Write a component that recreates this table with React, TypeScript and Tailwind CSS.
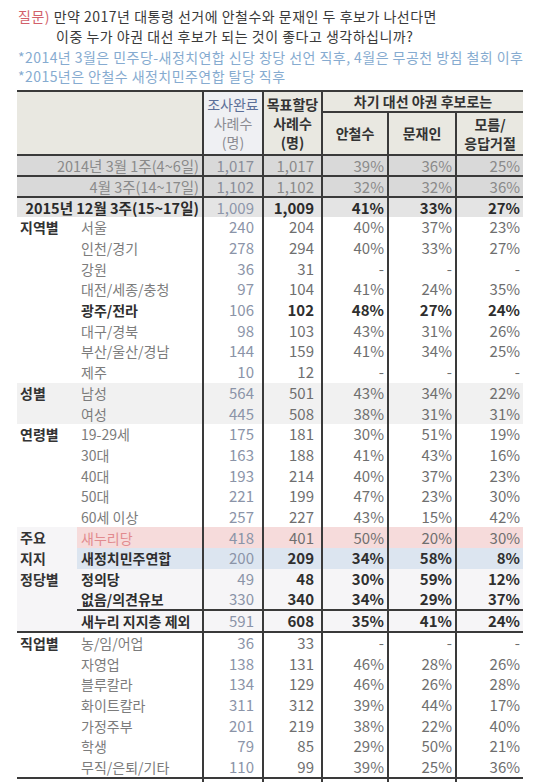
type RowStyle = "normal" | "bold" | "nuri" | "minju"

interface DataRow {
  label: string
  done: string
  target: string
  ahn: string
  moon: string
  none: string
  style?: RowStyle
  splitTop?: boolean
}

interface Group {
  name: string[]
  shade?: string
  ruled?: boolean
  rows: DataRow[]
}

const r = (
  label: string,
  done: string,
  target: string,
  ahn: string,
  moon: string,
  none: string,
  style: RowStyle = "normal",
  splitTop = false
): DataRow => ({ label, done, target, ahn, moon, none, style, splitTop })

const groups: Group[] = [
  {
    name: ["지역별"],
    rows: [
      r("서울", "240", "204", "40%", "37%", "23%"),
      r("인천/경기", "278", "294", "40%", "33%", "27%"),
      r("강원", "36", "31", "-", "-", "-"),
      r("대전/세종/충청", "97", "104", "41%", "24%", "35%"),
      r("광주/전라", "106", "102", "48%", "27%", "24%", "bold"),
      r("대구/경북", "98", "103", "43%", "31%", "26%"),
      r("부산/울산/경남", "144", "159", "41%", "34%", "25%"),
      r("제주", "10", "12", "-", "-", "-"),
    ],
  },
  {
    name: ["성별"],
    shade: "bg-[#f1f1f1]",
    rows: [r("남성", "564", "501", "43%", "34%", "22%"), r("여성", "445", "508", "38%", "31%", "31%")],
  },
  {
    name: ["연령별"],
    rows: [
      r("19-29세", "175", "181", "30%", "51%", "19%"),
      r("30대", "163", "188", "41%", "43%", "16%"),
      r("40대", "193", "214", "40%", "37%", "23%"),
      r("50대", "221", "199", "47%", "23%", "30%"),
      r("60세 이상", "257", "227", "43%", "15%", "42%"),
    ],
  },
  {
    name: ["주요", "지지", "정당별"],
    shade: "bg-[#f6f5f7]",
    ruled: true,
    rows: [
      r("새누리당", "418", "401", "50%", "20%", "30%", "nuri"),
      r("새정치민주연합", "200", "209", "34%", "58%", "8%", "minju"),
      r("정의당", "49", "48", "30%", "59%", "12%", "bold"),
      r("없음/의견유보", "330", "340", "34%", "29%", "37%", "bold"),
      r("새누리 지지층 제외", "591", "608", "35%", "41%", "24%", "bold", true),
    ],
  },
  {
    name: ["직업별"],
    ruled: true,
    rows: [
      r("농/임/어업", "36", "33", "-", "-", "-"),
      r("자영업", "138", "131", "46%", "28%", "26%"),
      r("블루칼라", "134", "129", "46%", "26%", "28%"),
      r("화이트칼라", "311", "312", "39%", "44%", "17%"),
      r("가정주부", "201", "219", "38%", "22%", "40%"),
      r("학생", "79", "85", "29%", "50%", "21%"),
      r("무직/은퇴/기타", "110", "99", "39%", "25%", "36%"),
    ],
  },
  {
    name: ["이념성향별"],
    rows: [
      r("보수", "281", "297", "46%", "27%", "27%"),
      r("중도", "306", "299", "40%", "39%", "21%"),
      r("진보", "257", "247", "33%", "48%", "19%"),
    ],
  },
]

export default function App() {
  return (
    <div className="min-h-screen bg-white font-['Noto_Sans_CJK_KR',sans-serif] text-[#333]">
      <div className="pl-[18px] pt-[6px]">
        <p className="text-[14px] leading-[20px] tracking-[0.5px] text-[#3a3a3a]">
          <span className="text-[#d2606a]">질문)</span> 만약 2017년 대통령 선거에 안철수와 문재인 두 후보가 나선다면
        </p>
        <p className="pl-[38px] text-[14px] leading-[20px] tracking-[0.5px] text-[#3a3a3a]">
          이중 누가 야권 대선 후보가 되는 것이 좋다고 생각하십니까?
        </p>
        <p className="mt-[1px] text-[14px] leading-[20px] tracking-[0.45px] text-[#86abd0]">
          *2014년 3월은 민주당-새정치연합 신당 창당 선언 직후, 4월은 무공천 방침 철회 이후
        </p>
        <p className="text-[14px] leading-[19px] tracking-[0.45px] text-[#86abd0]">
          *2015년은 안철수 새정치민주연합 탈당 직후
        </p>
      </div>

      <table className="ml-[17px] mt-[4px] w-[506px] table-fixed border-collapse">
        <colgroup>
          <col className="w-[60px]" />
          <col className="w-[126px]" />
          <col className="w-[60px]" />
          <col className="w-[59px]" />
          <col className="w-[66px]" />
          <col className="w-[68px]" />
          <col className="w-[67px]" />
        </colgroup>
        <thead>
          <tr className="h-[21px] border-t-2 border-[#3a3a3a]">
            <th rowSpan={2} colSpan={2} className="border-b-2 border-[#3a3a3a] bg-[#e9e8e1] p-0" />
            <th
              rowSpan={2}
              className="border-b-2 border-l-2 border-[#3a3a3a] bg-[#eff0f3] p-0 text-center text-[14px] font-normal leading-[19px]"
            >
              <div className="text-[#5c6f98]">조사완료</div>
              <div className="text-[#8b8b92]">사례수</div>
              <div className="text-[#8b8b92]">(명)</div>
            </th>
            <th
              rowSpan={2}
              className="border-b-2 border-l-2 border-[#3a3a3a] bg-[#e9e8e1] p-0 text-center text-[14px] font-bold leading-[19px] text-[#333]"
            >
              <div>목표할당</div>
              <div>사례수</div>
              <div>(명)</div>
            </th>
            <th
              colSpan={3}
              className="border-b-2 border-l-2 border-[#3a3a3a] bg-[#e9e8e1] p-0 text-center text-[14px] font-bold leading-[19px] text-[#333]"
            >
              차기 대선 야권 후보로는
            </th>
          </tr>
          <tr className="h-[43px]">
            <th className="border-b-2 border-l-2 border-[#3a3a3a] bg-[#e9e8e1] p-0 text-center text-[14px] font-bold text-[#333]">
              안철수
            </th>
            <th className="border-b-2 border-l-2 border-[#3a3a3a] bg-[#e9e8e1] p-0 text-center text-[14px] font-bold text-[#333]">
              문재인
            </th>
            <th className="border-b-2 border-l-2 border-[#3a3a3a] bg-[#e9e8e1] p-0 text-center text-[14px] font-bold leading-[19px] text-[#333]">
              모름/
              <br />
              응답거절
            </th>
          </tr>
        </thead>
        <tbody>
          <TrendRow label="2014년 3월 1주(4~6일)" vals={["1,017", "1,017", "39%", "36%", "25%"]} />
          <TrendRow label="4월 3주(14~17일)" vals={["1,102", "1,102", "32%", "32%", "36%"]} />
          <tr className="h-[19px] bg-[#e4e4e4]">
            <td colSpan={2} className="whitespace-nowrap p-0 pr-[3px] text-right text-[14.5px] font-bold leading-[19px] text-[#2b2b2b]">
              2015년 12월 3주(15~17일)
            </td>
            <td className="border-l-2 border-[#3a3a3a] p-0 pr-[8px] text-right text-[15px] leading-[19px] text-[#8d96aa]">1,009</td>
            <td className="border-l-2 border-[#3a3a3a] p-0 pr-[7px] text-right text-[15px] font-bold leading-[19px] text-[#2b2b2b]">1,009</td>
            <td className="border-l-2 border-[#3a3a3a] p-0 pr-[3px] text-right text-[15px] font-bold leading-[19px] text-[#2b2b2b]">41%</td>
            <td className="border-l-2 border-[#3a3a3a] p-0 pr-[3px] text-right text-[15px] font-bold leading-[19px] text-[#2b2b2b]">33%</td>
            <td className="border-l-2 border-[#3a3a3a] p-0 pr-[3px] text-right text-[15px] font-bold leading-[19px] text-[#2b2b2b]">27%</td>
          </tr>
          {groups.map((g) =>
            g.rows.map((row, i) => (
              <GroupRow key={g.name.join("") + row.label} group={g} row={row} first={i === 0} last={i === g.rows.length - 1} />
            ))
          )}
        </tbody>
      </table>
    </div>
  )
}

function TrendRow({ label, vals }: { label: string; vals: string[] }) {
  return (
    <tr className="h-[20px] border-b-2 border-[#3a3a3a] bg-[#d9d9d9]">
      <td colSpan={2} className="whitespace-nowrap p-0 pr-[3px] text-right text-[14.5px] leading-[19px] text-[#8a8a8a]">
        {label}
      </td>
      <td className="border-l-2 border-[#3a3a3a] p-0 pr-[8px] text-right text-[15px] leading-[19px] text-[#8a8e99]">{vals[0]}</td>
      <td className="border-l-2 border-[#3a3a3a] p-0 pr-[7px] text-right text-[15px] leading-[19px] text-[#8a8a8a]">{vals[1]}</td>
      <td className="border-l-2 border-[#3a3a3a] p-0 pr-[3px] text-right text-[15px] leading-[19px] text-[#8a8a8a]">{vals[2]}</td>
      <td className="border-l-2 border-[#3a3a3a] p-0 pr-[3px] text-right text-[15px] leading-[19px] text-[#8a8a8a]">{vals[3]}</td>
      <td className="border-l-2 border-[#3a3a3a] p-0 pr-[3px] text-right text-[15px] leading-[19px] text-[#8a8a8a]">{vals[4]}</td>
    </tr>
  )
}

function GroupRow({ group, row, first, last }: { group: Group; row: DataRow; first: boolean; last: boolean }) {
  const bottom = group.ruled && last ? "border-b-2 border-[#3a3a3a]" : ""
  const top = row.splitTop ? "border-t-2 border-[#3a3a3a]" : ""

  let rowBg = group.shade ?? "bg-white"
  if (row.style === "nuri") rowBg = "bg-[#f6dbdb]"
  if (row.style === "minju") rowBg = "bg-[#dce5f0]"

  const strong = row.style === "bold" || row.style === "minju"
  const labelColor =
    row.style === "nuri" ? "text-[#e28b8f]" : strong ? "text-[#2f2f2f] font-bold" : "text-[#7c7c7c]"
  const valColor = strong ? "text-[#2f2f2f] font-bold" : "text-[#6f6f6f]"

  return (
    <tr className="h-[20.7px]">
      {first && (
        <td
          rowSpan={group.rows.length}
          className={`${group.shade ?? "bg-white"} ${group.ruled ? "border-b-2 border-[#3a3a3a]" : ""} p-0 pl-[3px] align-top text-[14px] font-bold leading-[20.7px] text-[#333]`}
        >
          {group.name.map((n) => (
            <div key={n} className="whitespace-nowrap">
              {n}
            </div>
          ))}
        </td>
      )}
      <td className={`${rowBg} ${top} ${bottom} whitespace-nowrap p-0 pl-[4px] text-[14px] leading-[20px] ${labelColor}`}>
        {row.label}
      </td>
      <td className={`${rowBg} ${top} ${bottom} border-l-2 border-[#3a3a3a] p-0 pr-[8px] text-right text-[15px] leading-[20px] text-[#8b94a8]`}>
        {row.done}
      </td>
      <td className={`${rowBg} ${top} ${bottom} border-l-2 border-[#3a3a3a] p-0 pr-[7px] text-right text-[15px] leading-[20px] ${valColor}`}>
        {row.target}
      </td>
      <td className={`${rowBg} ${top} ${bottom} border-l-2 border-[#3a3a3a] p-0 pr-[3px] text-right text-[15px] leading-[20px] ${valColor}`}>
        {row.ahn}
      </td>
      <td className={`${rowBg} ${top} ${bottom} border-l-2 border-[#3a3a3a] p-0 pr-[3px] text-right text-[15px] leading-[20px] ${valColor}`}>
        {row.moon}
      </td>
      <td className={`${rowBg} ${top} ${bottom} border-l-2 border-[#3a3a3a] p-0 pr-[3px] text-right text-[15px] leading-[20px] ${valColor}`}>
        {row.none}
      </td>
    </tr>
  )
}
